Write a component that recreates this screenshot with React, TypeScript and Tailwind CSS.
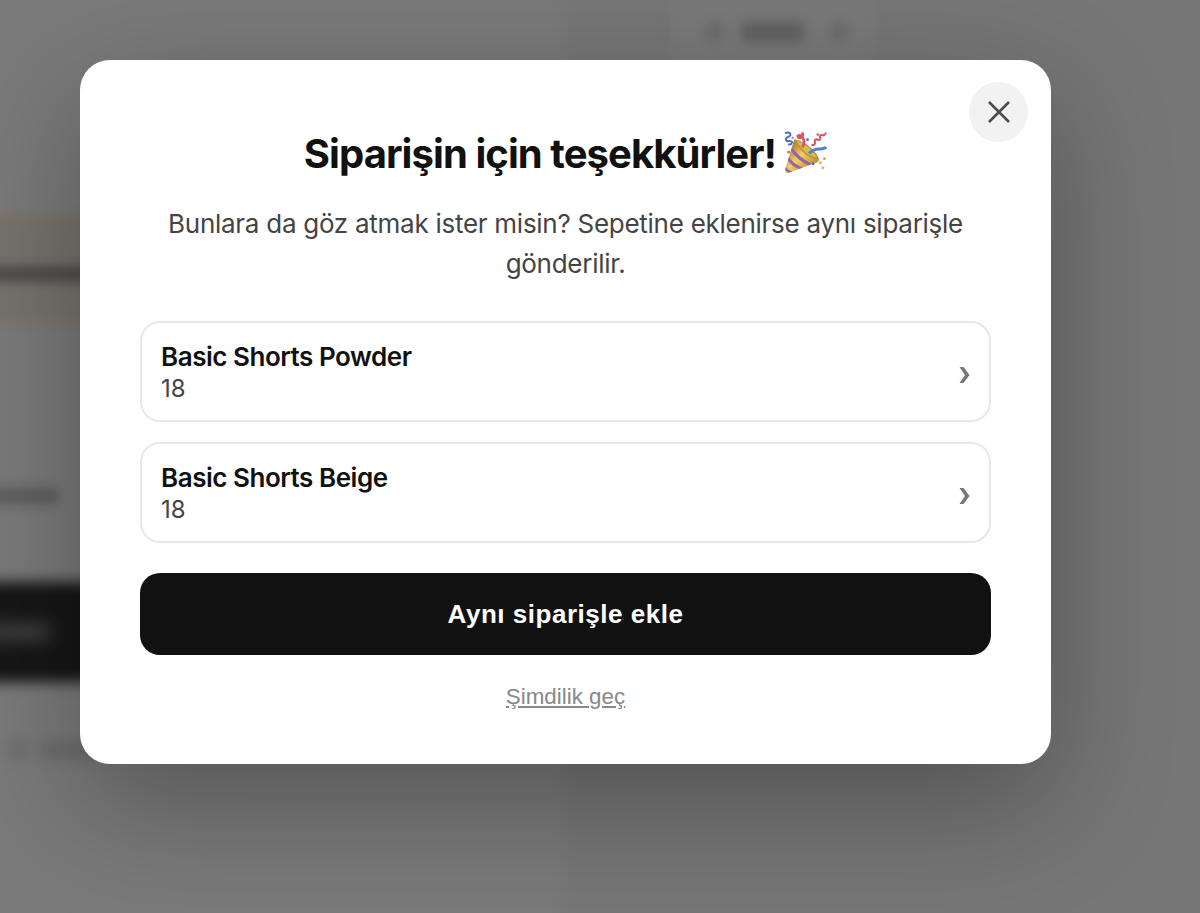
import { useState } from 'react';

interface Product {
  id: number;
  name: string;
  price: string;
}

const PRODUCTS: Product[] = [
  { id: 1, name: 'Basic Shorts Powder', price: '18' },
  { id: 2, name: 'Basic Shorts Beige', price: '18' },
];

function PartyPopper() {
  return (
    <svg viewBox="0 0 42 42" className="w-[43px] h-[43px] mb-1 shrink-0" aria-hidden="true">
      <defs>
        <linearGradient id="cone" x1="8" y1="16" x2="26" y2="34" gradientUnits="userSpaceOnUse">
          <stop offset="0" stopColor="#b98a2c" />
          <stop offset="0.45" stopColor="#f0cf62" />
          <stop offset="1" stopColor="#c79a35" />
        </linearGradient>
        <clipPath id="cone-clip">
          <path d="M10 8 L34 27 Q35 30 31 31 L4 41 Q.5 41.5 1 38 Z" />
        </clipPath>
      </defs>
      <g clipPath="url(#cone-clip)">
        <rect width="42" height="42" fill="url(#cone)" />
        <path d="M7 17 Q13 27 26 33" fill="none" stroke="#9a60b4" strokeWidth="3" />
        <path d="M3.5 26 Q8 34 18 37" fill="none" stroke="#9a60b4" strokeWidth="3" />
        <path d="M0 34 Q2 39 8 41" fill="none" stroke="#9a60b4" strokeWidth="2.4" />
      </g>
      <path d="M10 8 Q20 10 27 17 Q34 24 34 28 Q25 27 18 20 Q11 13 10 8Z" fill="#b8923a" />
      <path d="M12 9.500 Q21 12 26 18 Q31 23 32 26 Q25 25 19 19 Q14 14 12 9.500Z" fill="#d9b755" />
      <path d="M18 16 Q21 11 18.500 7 Q16 3 13.500 5 Q14 7 16 6.500 Q20 5 17.500 1.500" fill="none" stroke="#db5368" strokeWidth="2.600" />
      <path d="M1 2 Q4 .5 6 2.500 Q7 5 3.500 6 Q.5 8 3 10 Q7 9 8 11 Q7 14 4 13" fill="none" stroke="#4869c4" strokeWidth="1.900" />
      <path d="M24.500 22 Q29 17.500 34 17.500 Q38 18 41.500 16" fill="none" stroke="#4f80d3" strokeWidth="3" />
      <path d="M27 13 Q29 15 30.500 12 Q29 8 32 8 Q35 10 35.500 7 Q34 4 37 4 Q40 5 41 1.500" fill="none" stroke="#d65566" strokeWidth="2" />
      <circle cx="33" cy="3.500" r="1.300" fill="#c56a66" />
      <circle cx="23" cy="8.500" r="1.300" fill="#4869c4" />
      <circle cx="8.500" cy="6.500" r="1" fill="#d65566" />
      <circle cx="4.500" cy="20.500" r="1.500" fill="#b98c48" />
      <circle cx="39.500" cy="27" r="1.400" fill="#cda85b" />
      <circle cx="35.500" cy="31" r="1.500" fill="#d6b875" />
      <circle cx="38" cy="36" r="1.500" fill="#d8bd80" />
      <circle cx="28.500" cy="32" r="1.400" fill="#4869c4" />
    </svg>
  );
}

// Checkout page that stays visible, dimmed, behind the dialog
function PageBehind() {
  return (
    <div className="absolute inset-0 flex bg-linear-to-r from-[#7a7a7a] from-[46%] to-[#767676] to-[48%]" aria-hidden="true">
      <div className="w-[564px]">
        <div className="h-[214px]" />
        <div className="h-[110px] -ml-4 pt-[44px] border-y-8 border-[#7d7467] bg-[#74736d] blur-[5px]">
          <div className="h-4 w-44 bg-[#4e4d49] blur-[2px]" />
        </div>
        <div className="mt-[164px] -ml-4 h-4 w-[74px] bg-[#5c5c5c] blur-[6px]" />
        <div className="mt-[78px] -ml-5 h-[100px] pt-[40px] bg-[#161616] blur-[7px]">
          <div className="h-5 w-[70px] bg-[#3c3c3c] blur-[4px]" />
        </div>
        <div className="mt-[60px] flex gap-3 pl-2 blur-[7px]">
          <div className="h-4 w-5 bg-[#6c6c6c]" />
          <div className="h-4 w-20 bg-[#6a6a6a]" />
        </div>
      </div>
      <div className="flex-1">
        <div className="ml-[106px] flex h-[60px] w-[206px] items-center pl-[38px] pt-1 bg-[#797979] blur-[6px]">
          <div className="h-4 w-[14px] bg-[#676767]" />
          <div className="ml-5 h-5 w-[62px] bg-[#606060]" />
          <div className="ml-[28px] h-4 w-[14px] bg-[#676767]" />
        </div>
      </div>
    </div>
  );
}

export default function App() {
  const [open, setOpen] = useState(true);

  return (
    <div className="relative w-[1200px] h-[913px] overflow-hidden font-['Inter','Liberation_Sans',sans-serif]">
      <PageBehind />

      {open && (
        <div className="relative pt-[60px] pl-[80px]">
          <div
            role="dialog"
            aria-modal="true"
            className="relative flex flex-col items-center w-[971px] h-[704px] px-[60px] pt-[64px] bg-white rounded-[30px] shadow-[0_40px_120px_rgba(0,0,0,0.3)]"
          >
            <button
              onClick={() => setOpen(false)}
              aria-label="Kapat"
              className="absolute top-[22px] right-[23px] flex items-center justify-center w-[59px] h-[60px] rounded-full bg-[#f2f2f2]"
            >
              <svg viewBox="0 0 22 22" className="w-[22px] h-[22px]" fill="none" stroke="#4a4a4a" strokeWidth="2.5">
                <path d="M1 1 L21 21 M21 1 L1 21" />
              </svg>
            </button>

            <h2 className="flex items-center gap-2 h-[60px] text-[40px] font-bold tracking-[-0.93px] text-[#111] whitespace-nowrap">
              Siparişin için teşekkürler!
              <PartyPopper />
            </h2>
            <p className="mt-5 text-center text-[26px] leading-10 tracking-[-0.27px] text-[#444]">
              Bunlara da göz atmak ister misin? Sepetine eklenirse aynı siparişle
              <br />
              gönderilir.
            </p>

            <div className="flex flex-col gap-5 w-full mt-[37px]">
              {PRODUCTS.map(product => (
                <div
                  key={product.id}
                  className="flex items-center justify-between h-[101px] px-[19px] border-2 border-[#e8e8e8] rounded-[20px]"
                >
                  <div className="pt-[3px]">
                    <div className="text-[26px] leading-8 font-semibold tracking-[-0.47px] text-[#111]">{product.name}</div>
                    <div className="text-2xl leading-8 text-[#444]">{product.price}</div>
                  </div>
                  <svg viewBox="0 0 10 16" className="w-[11px] h-4 mt-[7px]" fill="#777">
                    <path d="M0 0 H4 L10 8 L4 16 H0 L5.500 8 Z" />
                  </svg>
                </div>
              ))}
            </div>

            <button className="w-full h-[82px] mt-[30px] shrink-0 rounded-[20px] bg-[#111] font-['Liberation_Sans',sans-serif] text-[26px] font-bold tracking-[0.02em] text-white">
              Aynı siparişle ekle
            </button>
            <button
              onClick={() => setOpen(false)}
              className="mt-[26px] font-['Liberation_Sans',sans-serif] text-[22.4px] leading-8 text-[#888] underline"
            >
              Şimdilik geç
            </button>
          </div>
        </div>
      )}
    </div>
  );
}
